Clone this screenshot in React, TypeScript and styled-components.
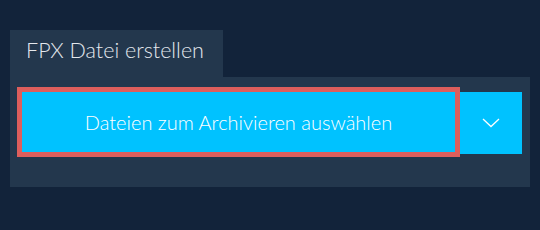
import React from "react";
import styled, { createGlobalStyle } from "styled-components";

const Global = createGlobalStyle`
  html, body { margin: 0; padding: 0; background: #12233a; }
  body { font-family: Lato, "Open Sans", sans-serif; }
`;

const Page = styled.div`
  width: 540px;
  height: 230px;
  box-sizing: border-box;
  padding: 30px 10px 0 10px;
  background: #12233a;
`;

const Tab = styled.div`
  width: 213px;
  height: 47px;
  box-sizing: border-box;
  padding: 6px 0 0 16px;
  background: #23374d;
  color: #e4e8ed;
  font-size: 21.5px;
  font-weight: 300;
  line-height: 28px;
`;

const Panel = styled.div`
  width: 520px;
  height: 110px;
  box-sizing: border-box;
  padding: 10px 0 0 7px;
  background: #23374d;
`;

const Row = styled.div`
  display: flex;
  align-items: flex-start;
`;

const MainButton = styled.button`
  width: 443px;
  height: 70px;
  box-sizing: border-box;
  border: 5px solid #dd5e5c;
  background: #00c2ff;
  color: #ffffff;
  font-family: Lato, "Open Sans", sans-serif;
  font-size: 20px;
  font-weight: 300;
  padding: 0;
  margin: 0;
  display: flex;
  align-items: center;
  justify-content: center;
  cursor: pointer;
`;

const DropButton = styled.button`
  width: 62px;
  height: 62px;
  margin: 5px 0 0 0;
  padding: 0;
  border: none;
  background: #00c2ff;
  display: flex;
  align-items: center;
  justify-content: center;
  cursor: pointer;
`;

export default function App() {
  return (
    <Page>
      <Global />
      <Tab>FPX Datei erstellen</Tab>
      <Panel>
        <Row>
          <MainButton>Dateien zum Archivieren auswählen</MainButton>
          <DropButton aria-label="Mehr">
            <svg width="18" height="10" viewBox="0 0 18 10">
              <polyline points="1,1 9,8.5 17,1" fill="none" stroke="#ffffff" strokeWidth="1.3" />
            </svg>
          </DropButton>
        </Row>
      </Panel>
    </Page>
  );
}
